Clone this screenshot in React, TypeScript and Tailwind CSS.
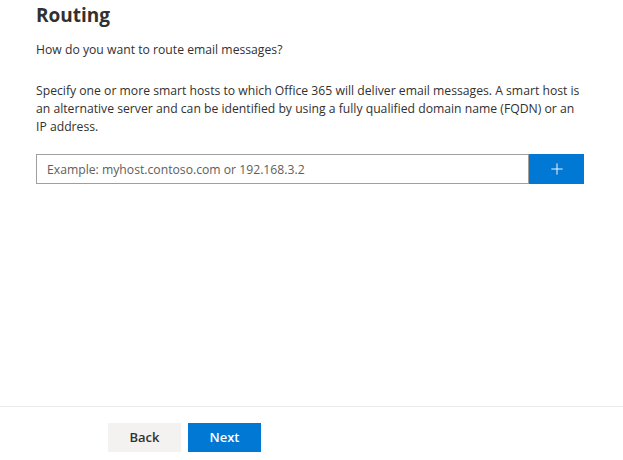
import { Plus } from "lucide-react";

export default function App() {
  return (
    <div
      className="flex h-[460px] w-[623px] flex-col bg-white text-[#323130]"
      style={{ fontFamily: '"Open Sans", "Noto Sans", sans-serif' }}
    >
      <div className="flex-1 px-9">
        <h1 className="mt-[1px] text-[19px] font-bold leading-[28px]">Routing</h1>
        <p className="mt-[12px] text-[12.2px] leading-[18px]">
          How do you want to route email messages?
        </p>
        <p className="mt-[23px] w-[580px] text-[12.2px] leading-[18px]">
          Specify one or more smart hosts to which Office 365 will deliver email messages. A smart host is
          <br />
          an alternative server and can be identified by using a fully qualified domain name (FQDN) or an
          <br />
          IP address.
        </p>
        <div className="mt-[18px] flex h-[30px] w-[548px]">
          <input
            className="h-full flex-1 border border-[#a19f9d] px-[10px] text-[12.2px] outline-none placeholder:text-[#605e5c]"
            placeholder="Example: myhost.contoso.com or 192.168.3.2"
          />
          <button className="flex h-full w-[55px] items-center justify-center bg-[#0078d4] text-white">
            <Plus className="h-[18px] w-[18px]" strokeWidth={1.25} />
          </button>
        </div>
      </div>
      <div className="border-t border-[#edebe9] pt-[16px] pb-[8px] pl-[108px]">
        <div className="flex gap-[7px]">
          <button className="h-[29px] w-[73px] bg-[#f3f2f1] text-[13px] font-semibold text-[#323130]">
            Back
          </button>
          <button className="h-[29px] w-[73px] bg-[#0078d4] text-[13px] font-semibold text-white">
            Next
          </button>
        </div>
      </div>
    </div>
  );
}
